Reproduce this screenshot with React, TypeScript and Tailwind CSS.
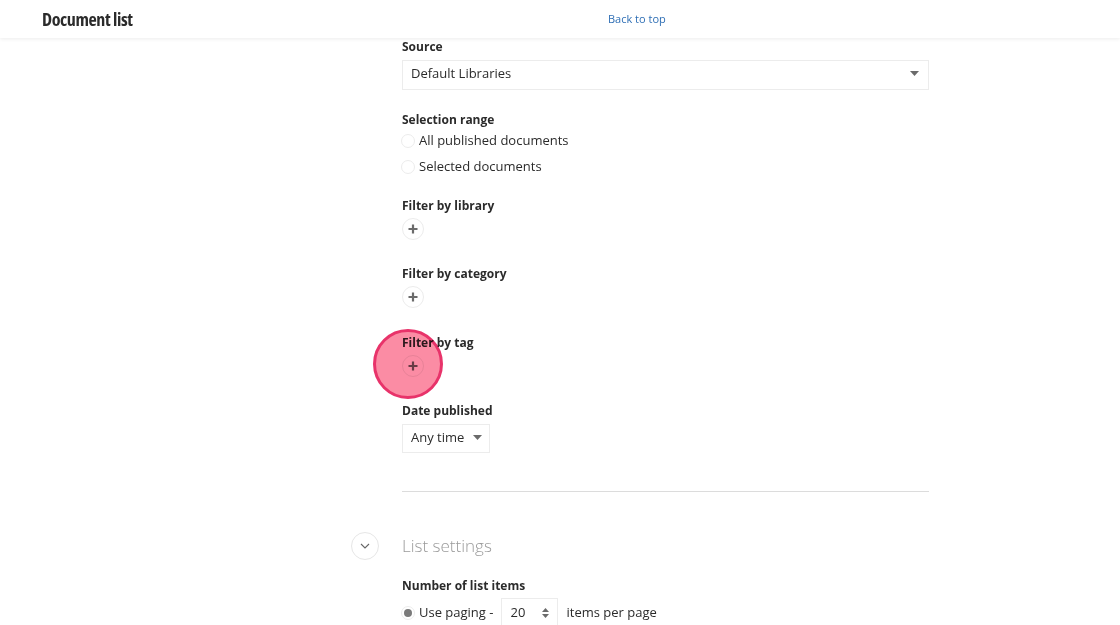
import { useState } from 'react'

function Caret() {
  return (
    <svg width="9" height="5" viewBox="0 0 9 5" className="shrink-0">
      <path d="M0 0h9L4.5 5z" fill="#6b6b6b" />
    </svg>
  )
}

function Label({ children }: { children: React.ReactNode }) {
  return <div className="text-[12px] font-bold text-[#2b2b2b] leading-[18px]">{children}</div>
}

function PlusButton() {
  return (
    <button className="w-[22px] h-[22px] rounded-full border border-[#ececec] bg-white flex items-center justify-center">
      <svg width="10" height="10" viewBox="0 0 10 10">
        <path d="M5 0.5v9M0.5 5h9" stroke="#6b6b6b" strokeWidth="2.2" />
      </svg>
    </button>
  )
}

function Radio({ label, checked }: { label: string; checked?: boolean }) {
  return (
    <label className="flex items-center gap-[4px] text-[13px] text-[#2b2b2b] h-[26px]">
      <span className="w-[14px] h-[14px] rounded-full border border-[#ececec] flex items-center justify-center">
        {checked && <span className="w-[8px] h-[8px] rounded-full bg-[#7a7a7a]" />}
      </span>
      {label}
    </label>
  )
}

export default function App() {
  const [source] = useState('Default Libraries')

  return (
    <div className="relative w-[1120px] h-[625px] overflow-hidden bg-white font-['Open_Sans',sans-serif]">
      <header className="relative z-10 h-[38px] flex items-center bg-white shadow-[0_1px_4px_rgba(0,0,0,0.08)]">
        <h1 className="ml-[42px] text-[18px] font-bold text-[#2b2b2b] tracking-[-0.4px] [font-stretch:condensed]">
          Document list
        </h1>
        <a className="absolute left-[608px] text-[11px] text-[#2f6fb5]">Back to top</a>
      </header>

      <main className="ml-[402px] w-[527px]">
        <Label>Source</Label>
        <div className="mt-[4px] h-[30px] border border-[#ececec] flex items-center justify-between pl-[8px] pr-[9px] pb-[3px] text-[13px] text-[#2b2b2b]">
          <span>{source}</span>
          <Caret />
        </div>

        <div className="mt-[21px]">
          <Label>Selection range</Label>
          <div className="-mt-[1px] -ml-[1px]">
            <Radio label="All published documents" />
            <Radio label="Selected documents" />
          </div>
        </div>

        <div className="mt-[17px]">
          <Label>Filter by library</Label>
          <div className="mt-[3px]"><PlusButton /></div>
        </div>

        <div className="mt-[25px]">
          <Label>Filter by category</Label>
          <div className="mt-[3px]"><PlusButton /></div>
        </div>

        <div className="mt-[26px]">
          <Label>Filter by tag</Label>
          <div className="mt-[3px]"><PlusButton /></div>
        </div>

        <div className="mt-[25px]">
          <Label>Date published</Label>
          <div className="mt-[4px] w-[88px] h-[29px] border border-[#ececec] flex items-center justify-between pl-[8px] pr-[7px] pb-[2px] text-[13px] text-[#2b2b2b]">
            <span>Any time</span>
            <Caret />
          </div>
        </div>

        <div className="mt-[38px] border-t border-[#dcdcdc]" />

        <div className="relative mt-[40px] h-[28px] flex items-center">
          <button className="absolute -left-[51px] w-[28px] h-[28px] rounded-full border border-[#e6e6e6] bg-white flex items-center justify-center">
            <svg width="10" height="6" viewBox="0 0 10 6">
              <path d="M1 1l4 4 4-4" stroke="#666" strokeWidth="1.1" fill="none" />
            </svg>
          </button>
          <h2 className="text-[17px] font-light text-[#9a9a9a]">List settings</h2>
        </div>

        <div className="mt-[17px]">
          <Label>Number of list items</Label>
          <div className="mt-[3px] -ml-[1px] flex items-center gap-[8px] text-[13px] text-[#2b2b2b]">
            <Radio label="Use paging -" checked />
            <div className="w-[57px] h-[30px] border border-[#ececec] flex items-center justify-between pl-[8px] pr-[8px]">
              <span>20</span>
              <svg width="7" height="12" viewBox="0 0 7 12">
                <path d="M0 5h7L3.5 1z M0 7h7L3.5 11z" fill="#6b6b6b" />
              </svg>
            </div>
            <span>items per page</span>
          </div>
        </div>
      </main>

      <div className="absolute left-[373px] top-[329px] w-[70px] h-[70px] rounded-full bg-[#fb8ca4] mix-blend-multiply border-[3px] border-[#e8336a] pointer-events-none" />
    </div>
  )
}
